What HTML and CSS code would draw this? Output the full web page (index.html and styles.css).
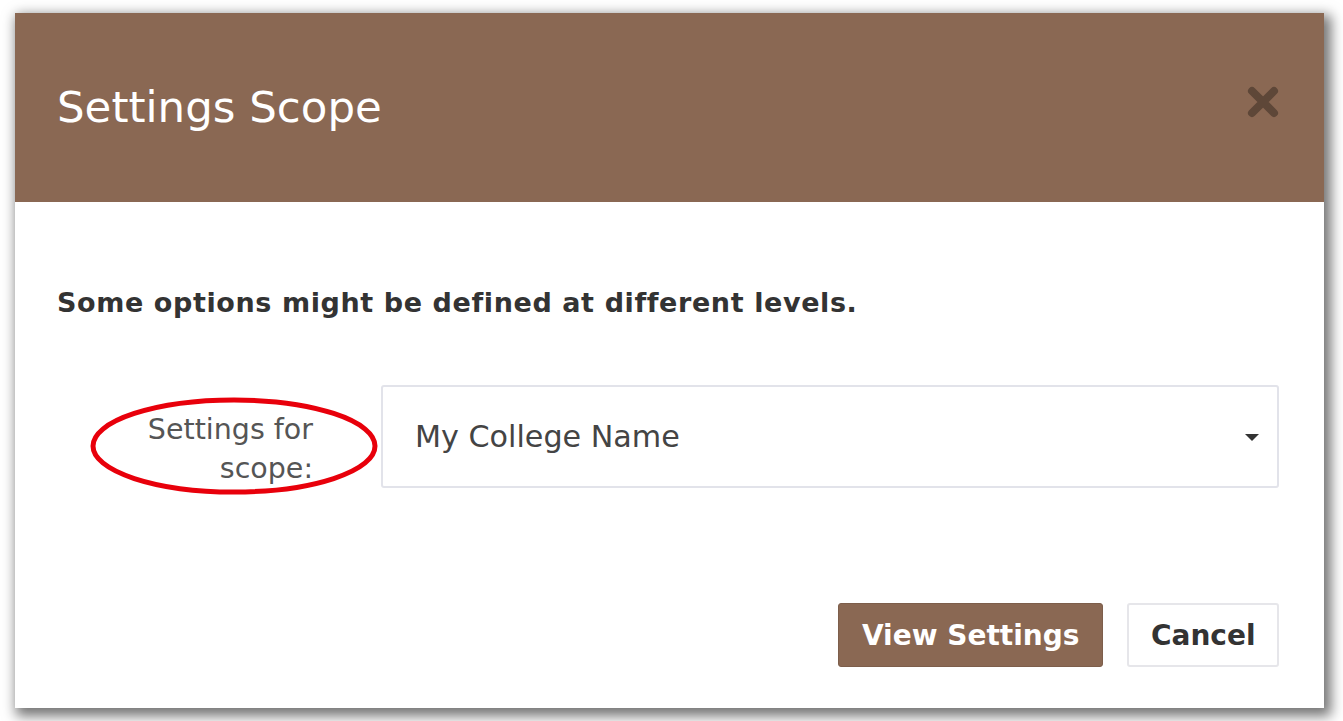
FILE: index.html
```html
<!DOCTYPE html>
<html>
<head>
<meta charset="utf-8">
<link rel="stylesheet" href="styles.css">
</head>
<body>
<div class="modal">
  <div class="modal-header">
    <h1 class="modal-title">Settings Scope</h1>
    <button class="close" aria-label="Close">
      <svg width="34" height="34" viewBox="0 0 34 34"><path d="M6 6 L28 28 M28 6 L6 28" stroke="#5e4738" stroke-width="8" stroke-linecap="round"/></svg>
    </button>
  </div>
  <div class="modal-body">
    <p class="intro">Some options might be defined at different levels.</p>
    <div class="form-row">
      <label class="label">Settings for scope:</label>
      <div class="select">
        <span class="select-text">My College Name</span>
        <span class="caret"></span>
      </div>
      <svg class="ring" width="290" height="100" viewBox="0 0 290 100"><ellipse cx="145" cy="50" rx="141" ry="46" fill="none" stroke="#e8000b" stroke-width="5"/></svg>
    </div>
    <div class="actions">
      <button class="btn btn-primary">View Settings</button>
      <button class="btn btn-default">Cancel</button>
    </div>
  </div>
</div>
</body>
</html>
```
FILE: styles.css
```css
html, body {
  margin: 0;
  padding: 0;
  background: #ffffff;
}
body {
  box-sizing: border-box;
  min-height: 721px;
  padding: 13px 0 13px 15px;
  font-family: "DejaVu Sans", Verdana, sans-serif;
}
.modal {
  width: 1309px;
  height: 695px;
  background: #fff;
  box-shadow: 4px 5px 12px 3px rgba(0,0,0,0.55);
  display: flex;
  flex-direction: column;
}
.modal-header {
  height: 189px;
  background: #8a6853;
  display: flex;
  align-items: center;
  justify-content: space-between;
  padding: 0 44px 0 42px;
  box-sizing: border-box;
}
.modal-title {
  margin: 0;
  color: #fff;
  font-weight: normal;
  font-size: 43.5px;
  padding-bottom: 2px;
}
.close {
  background: none;
  border: 0;
  padding: 0;
  margin-bottom: 12px;
  display: flex;
}
.modal-body {
  padding: 84px 45px 0 42px;
  display: flex;
  flex-direction: column;
}
.intro {
  margin: 0;
  font-weight: bold;
  font-size: 27px;
  letter-spacing: 0.6px;
  line-height: 34px;
  color: #333;
}
.form-row {
  position: relative;
  display: flex;
  align-items: flex-start;
  margin-top: 65px;
}
.label {
  flex: 0 0 256px;
  box-sizing: border-box;
  padding: 25px 0 0 40px;
  text-align: right;
  font-size: 28.5px;
  line-height: 39px;
  color: #555;
}
.select {
  margin-left: 68px;
  flex: 1;
  height: 103px;
  box-sizing: border-box;
  border: 2px solid #e2e3ea;
  border-radius: 3px;
  display: flex;
  align-items: center;
  justify-content: space-between;
  padding: 0 18px 0 32px;
}
.select-text {
  font-size: 30.2px;
  color: #444;
}
.caret {
  width: 0;
  height: 0;
  border-left: 7px solid transparent;
  border-right: 7px solid transparent;
  border-top: 7px solid #333;
  margin-top: 2px;
}
.ring {
  position: absolute;
  left: 32px;
  top: 11px;
}
.actions {
  margin-top: 115px;
  display: flex;
  justify-content: flex-end;
  gap: 24px;
}
.btn {
  height: 64px;
  padding: 0 23px;
  font-family: "DejaVu Sans", Verdana, sans-serif;
  font-weight: bold;
  font-size: 28px;
  border-radius: 3px;
  cursor: pointer;
}
.btn-primary {
  background: #8a6853;
  color: #fff;
  border: 1px solid #7d5e4b;
}
.btn-default {
  background: #fff;
  color: #333;
  border: 2px solid #e6e6ea;
  padding: 0 21.5px;
}
```
